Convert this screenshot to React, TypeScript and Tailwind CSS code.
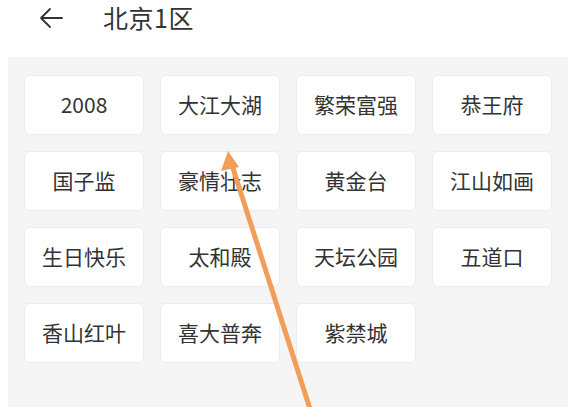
import React from "react";

const items = [
  "2008",
  "大江大湖",
  "繁荣富强",
  "恭王府",
  "国子监",
  "豪情壮志",
  "黄金台",
  "江山如画",
  "生日快乐",
  "太和殿",
  "天坛公园",
  "五道口",
  "香山红叶",
  "喜大普奔",
  "紫禁城",
];

const font = {
  fontFamily: '"Noto Sans CJK SC", Roboto, "Noto Sans", sans-serif',
};

export default function App() {
  return (
    <div className="relative w-[568px] h-[407px] overflow-hidden bg-white" style={font}>
      {/* Header */}
      <div className="flex items-start h-[57px] pt-[5px]">
        <svg className="ml-[39px] mt-[2px] w-[24px] h-[22px]" viewBox="0 0 24 22" fill="none" stroke="#333" strokeWidth="1.8" strokeLinecap="round" strokeLinejoin="round">
          <path d="M23 11H2M11 2L2 11l9 9" />
        </svg>
        <h1 className="ml-[40px] text-[25px] leading-none text-[#333] tracking-[0.5px]">北京1区</h1>
      </div>

      {/* Grid panel */}
      <div className="ml-[8px] h-[350px] bg-[#f5f5f5] pl-4 pr-4 pt-[18px]">
        <div className="grid grid-cols-4 gap-4">
          {items.map((t) => (
            <div
              key={t}
              className="h-[60px] flex items-center justify-center bg-white rounded-md border border-[#ebebeb] text-[21px] text-[#333]"
            >
              {t}
            </div>
          ))}
        </div>
      </div>

      {/* Annotation arrow */}
      <svg className="absolute left-0 top-0 pointer-events-none" width="568" height="407" viewBox="0 0 568 407">
        <line x1="231" y1="162" x2="311" y2="412" stroke="#f29d58" strokeWidth="5" />
        <polygon points="228,151 239,167 221,171" fill="#f29d58" />
      </svg>
    </div>
  );
}
